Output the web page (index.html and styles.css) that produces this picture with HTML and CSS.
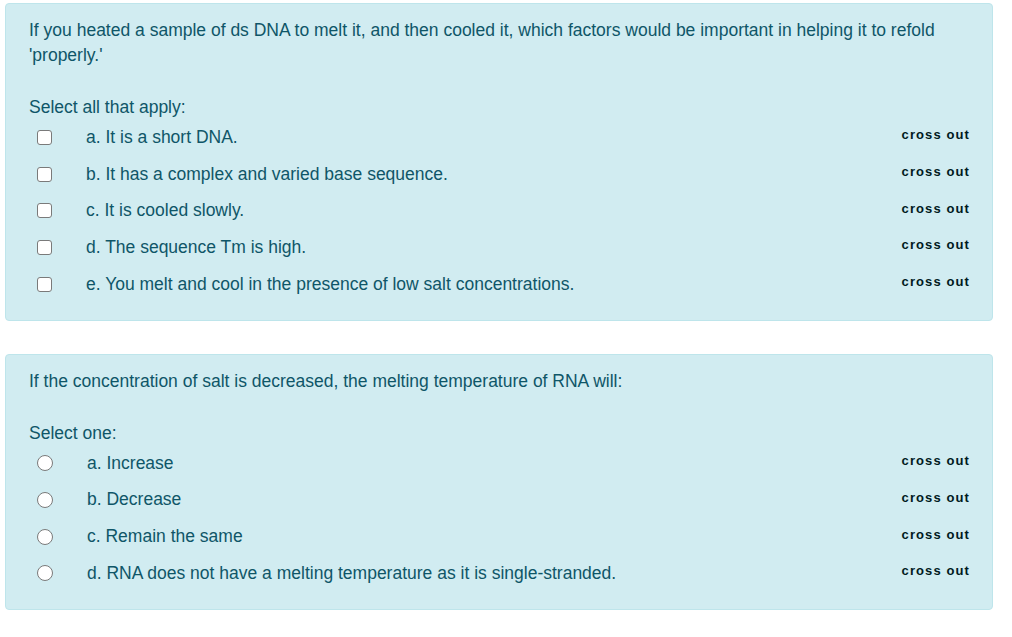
FILE: index.html
```html
<!DOCTYPE html>
<html>

<head lang="en">
    <meta charset="UTF-8">
    <title>Quiz</title>
    <link rel="stylesheet" href="styles.css">
</head>

<body>
    <div class="quiz">
        <!-- 多选题 -->
        <div class="que">
            <div class="qtext">If you heated a sample of ds DNA to melt it, and then cooled it, which factors would be important in helping it to refold 'properly.'</div>
            <div class="prompt">Select all that apply:</div>
            <div class="answer">
                <div class="option">
                    <input type="checkbox" class="box">
                    <label>a. It is a short DNA.</label>
                    <a href="javascript:;" class="cross-out">cross out</a>
                </div>
                <div class="option">
                    <input type="checkbox" class="box">
                    <label>b. It has a complex and varied base sequence.</label>
                    <a href="javascript:;" class="cross-out">cross out</a>
                </div>
                <div class="option">
                    <input type="checkbox" class="box">
                    <label>c. It is cooled slowly.</label>
                    <a href="javascript:;" class="cross-out">cross out</a>
                </div>
                <div class="option">
                    <input type="checkbox" class="box">
                    <label>d. The sequence Tm is high.</label>
                    <a href="javascript:;" class="cross-out">cross out</a>
                </div>
                <div class="option">
                    <input type="checkbox" class="box">
                    <label>e. You melt and cool in the presence of low salt concentrations.</label>
                    <a href="javascript:;" class="cross-out">cross out</a>
                </div>
            </div>
        </div>

        <!-- 单选题 -->
        <div class="que">
            <div class="qtext">If the concentration of salt is decreased, the melting temperature of RNA will:</div>
            <div class="prompt">Select one:</div>
            <div class="answer">
                <div class="option">
                    <input type="radio" name="q2" class="radio">
                    <label>a. Increase</label>
                    <a href="javascript:;" class="cross-out">cross out</a>
                </div>
                <div class="option">
                    <input type="radio" name="q2" class="radio">
                    <label>b. Decrease</label>
                    <a href="javascript:;" class="cross-out">cross out</a>
                </div>
                <div class="option">
                    <input type="radio" name="q2" class="radio">
                    <label>c. Remain the same</label>
                    <a href="javascript:;" class="cross-out">cross out</a>
                </div>
                <div class="option">
                    <input type="radio" name="q2" class="radio">
                    <label>d. RNA does not have a melting temperature as it is single-stranded.</label>
                    <a href="javascript:;" class="cross-out">cross out</a>
                </div>
            </div>
        </div>
    </div>
</body>

</html>
```

FILE: styles.css
```css
* {
    padding: 0px;
    margin: 0px;
    box-sizing: border-box;
}

body {
    background: #ffffff;
    font-family: "Liberation Sans", Arial, sans-serif;
}

.quiz {
    padding: 3px 19px 0px 5px;
}

/* 题目卡片 */
.que {
    background: #d1ecf1;
    border: #bee5eb 1px solid;
    border-radius: 4px;
    padding: 14px 22px 17.5px 23px;
    color: #0f5668;
    font-size: 17.5px;
}

.que + .que {
    margin-top: 33px;
}

.qtext {
    line-height: 25px;
    padding-right: 30px;
}

.prompt {
    margin-top: 28px;
    line-height: 23px;
}

.option {
    display: flex;
    align-items: center;
    height: 36.7px;
    padding-left: 8px;
}

.option label {
    flex: 1;
    padding-left: 34px;
}

/* 复选框和单选框 */
.option input {
    -webkit-appearance: none;
    appearance: none;
    flex: none;
    width: 15px;
    height: 15px;
    background: #ffffff;
    border: #7a7a7a 1px solid;
    border-radius: 3px;
}

.option input.radio {
    width: 16px;
    height: 16px;
    border-radius: 50%;
}

/* 划掉按钮 */
.cross-out {
    text-decoration: none;
    color: #001a1e;
    font-size: 13px;
    font-weight: bold;
    letter-spacing: 1.1px;
    margin-top: -5px;
}
```
